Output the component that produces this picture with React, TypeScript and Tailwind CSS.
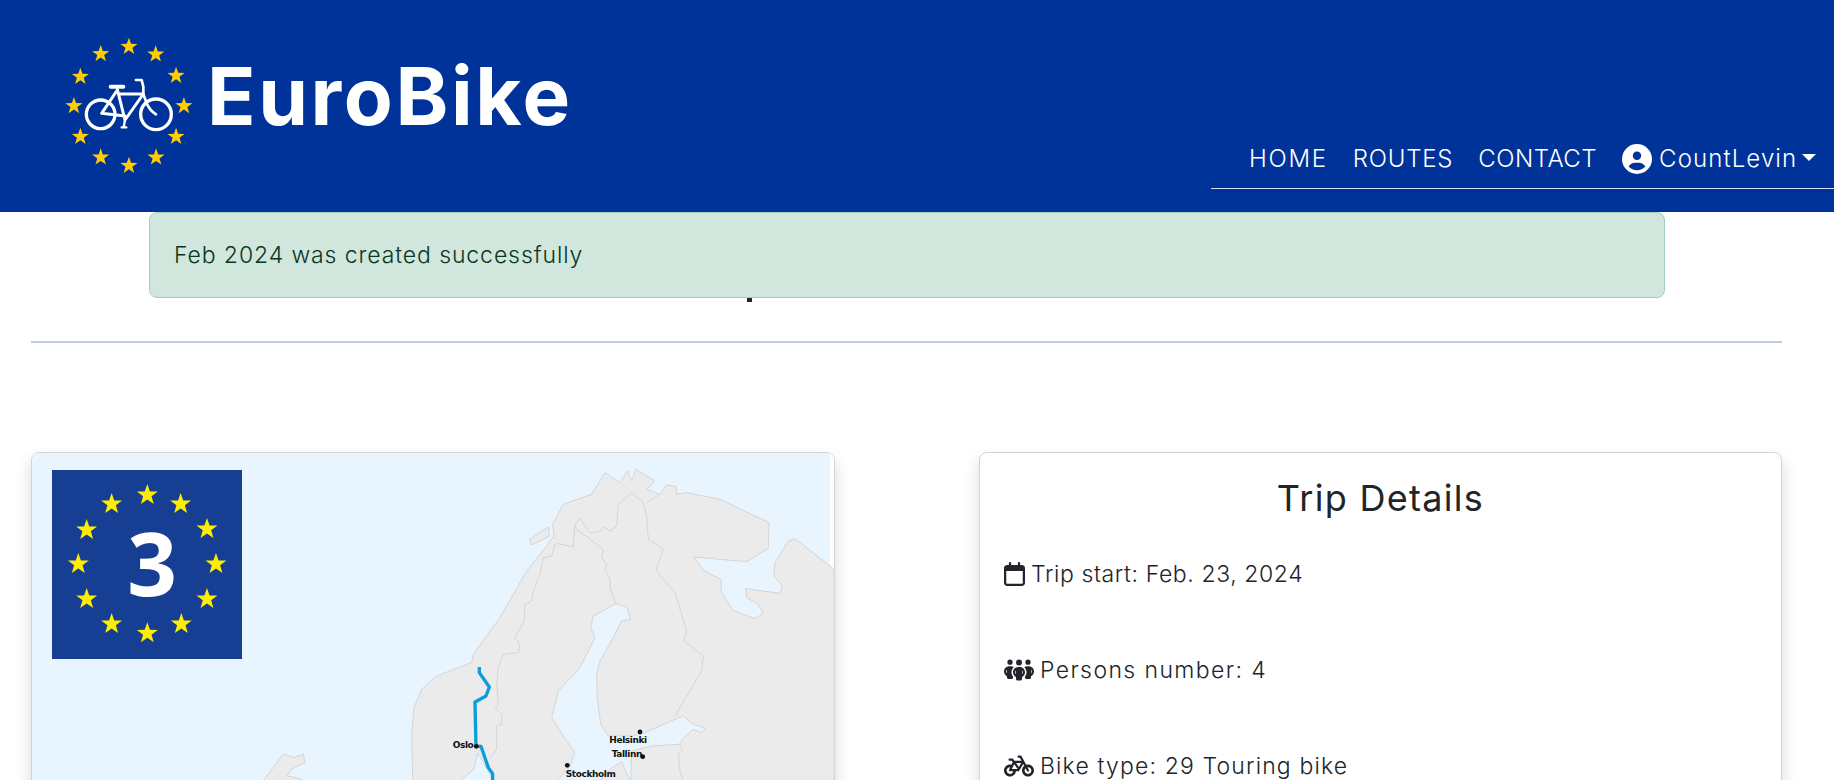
import React from "react";
import { FaRegCalendar, FaPeopleGroup, FaBicycle, FaCircleUser } from "react-icons/fa6";

function starPoints(cx: number, cy: number, R: number): string {
  const pts: string[] = [];
  for (let i = 0; i < 10; i++) {
    const r = i % 2 === 0 ? R : R * 0.4;
    const a = -Math.PI / 2 + (i * Math.PI) / 5;
    pts.push(`${(cx + r * Math.cos(a)).toFixed(2)},${(cy + r * Math.sin(a)).toFixed(2)}`);
  }
  return pts.join(" ");
}

const logoStars = [
  [249, 80], [324, 103], [381, 167], [403, 258], [381, 350], [325, 412],
  [249, 437], [170, 412], [113, 350], [95, 258], [113, 170], [170, 102],
].map(([x, y]) => [x / 2.8 + 40, y / 3 + 20]);

const flagStars = [
  [382, 160], [482, 187], [561, 262], [588, 367], [561, 472], [484, 547],
  [382, 575], [275, 547], [200, 472], [175, 367], [200, 265], [275, 187],
];

function Logo() {
  return (
    <svg width="130" height="140" viewBox="65 36 130 140" className="shrink-0">
      {logoStars.map(([x, y], i) => (
        <polygon key={i} points={starPoints(x, y, 9)} fill="#ffcc00" />
      ))}
      <g transform="translate(80 70) scale(0.3333)" fill="none" stroke="#fff" strokeWidth="10" strokeLinecap="round" strokeLinejoin="round">
        <circle cx="62" cy="133" r="43" />
        <circle cx="228" cy="133" r="46" />
        <path d="M112 58 L135 150 L190 72 L116 72 M112 60 L65 130 L135 138" strokeWidth="9" />
        <path d="M92 50 L130 50" strokeWidth="12" />
        <path d="M168 30 L185 30 L190 50 L190 72 L200 100 Q210 122 228 133" strokeWidth="8" />
        <path d="M135 150 L131 172 M125 172 L139 172" strokeWidth="7" />
      </g>
    </svg>
  );
}

function MapImage() {
  return (
    <svg viewBox="32 452 802 598" className="block h-[598px] w-[802px] bg-[#e8f5fe]">
      <g transform="translate(20 440) scale(0.3333)">
        <polygon
          points="730,1100 730,1020 790,938 820,950 850,940 855,965 815,985 800,1005 830,1010 880,1030 880,1100"
          fill="#ebebeb"
          stroke="#d4d4d4"
          strokeWidth="3"
        />
      </g>
      <g transform="translate(400 440) scale(0.3333)" strokeLinejoin="round">
        <polygon points="1290,30 1310,30 1310,392 1290,375" fill="#ffffff" />
        <polygon
          points="40,1100 35,880 42,800 65,745 110,705 215,665 220,640 300,530 340,460 380,390 440,315 462,285 458,250 490,190 575,160 615,95 660,125 683,88 695,120 708,85 765,120 740,145 780,160 800,132 828,137 830,160 860,155 960,175 1107,245 1105,322 1040,362 880,348 915,390 962,415 965,455 998,508 1065,533 1090,517 1075,490 1040,470 1037,443 1140,457 1147,435 1122,405 1125,365 1165,300 1185,293 1303,385 1303,1100"
          fill="#ebebeb"
          stroke="#d4d4d4"
          strokeWidth="3"
        />
        <polygon points="388,295 445,258 448,285 395,312" fill="#ebebeb" stroke="#d4d4d4" strokeWidth="3" />
        <polygon
          points="648,488 680,498 692,535 665,540 640,590 600,660 590,700 592,770 602,850 625,885 700,885 735,875 825,835 850,825 880,850 918,862 905,875 880,865 850,892 838,910 755,915 695,930 690,1100 470,1100 470,1020 490,1000 510,975 525,935 490,885 455,830 475,750 540,680 585,590 572,560 580,525"
          fill="#e8f5fe"
          stroke="#d4d4d4"
          strokeWidth="3"
        />
        <polygon points="590,1030 630,985 665,962 690,1020 700,1100 570,1100" fill="#ebebeb" stroke="#d4d4d4" strokeWidth="3" />
        <polygon points="233,935 222,985 180,1020 170,1100 300,1100 270,1000 250,965" fill="#e8f5fe" stroke="#d4d4d4" strokeWidth="3" />
        <g fill="none" stroke="#d4d4d4" strokeWidth="3">
          <polyline points="465,310 475,308 520,318 525,250 540,232 570,275 600,272 610,258 630,270 650,255 655,190 695,155 730,185 740,225 745,295 790,325 768,388 825,455 860,570 852,600 910,645 905,690 825,825" />
          <polyline points="525,250 530,265 610,325 605,350 620,370 615,385 630,415 630,440 648,488" />
          <polyline points="465,310 455,345 430,350 420,400 400,450 395,480 375,490 372,540 345,590 360,610 355,635 310,640 295,680 290,730 295,790 285,800 305,820 305,850 290,855 290,925 270,950" />
          <polyline points="740,185 780,160" />
          <polyline points="840,912 848,928 835,940 840,990 850,1020 870,1100" />
        </g>
        <polyline
          points="238,678 238,695 268,738 258,765 225,783 228,916 243,916 265,980 278,998 278,1100"
          fill="none"
          stroke="#0a9ed9"
          strokeWidth="10"
        />
      </g>
      <g fill="#111">
        <circle cx="476.3" cy="745.3" r="2.4" />
        <circle cx="567.3" cy="764.3" r="2.4" />
        <circle cx="640" cy="731" r="2.4" />
        <circle cx="642.7" cy="755.7" r="2.4" />
        <g fontFamily="'DejaVu Sans', sans-serif" fontSize="9" fontWeight="700" letterSpacing="-0.4">
          <text x="452.7" y="746.7">Oslo</text>
          <text x="565.7" y="776">Stockholm</text>
          <text x="609.3" y="742.3">Helsinki</text>
          <text x="611.7" y="756">Tallinn</text>
        </g>
      </g>
      <rect x="52" y="469" width="190" height="189" fill="#163f94" />
      <g transform="translate(20 440) scale(0.3333)">
        {flagStars.map(([x, y], i) => (
          <polygon key={i} points={starPoints(x, y + 2, 33)} fill="#ffed00" />
        ))}
      </g>
      <text x="152" y="595" textAnchor="middle" fill="#fff" fontFamily="'Open Sans', sans-serif" fontWeight="700" fontSize="87">
        3
      </text>
    </svg>
  );
}

export default function App() {
  return (
    <div className="relative h-[780px] overflow-hidden bg-white text-[#212529] [font-family:Inter,sans-serif]">
      <header className="flex h-[212px] justify-between bg-[#003399]">
        <div className="flex items-start pl-[65px] pt-[36px]">
          <Logo />
          <span className="ml-[12px] mt-[14px] text-[80px] leading-[92px] font-bold tracking-[2.6px] text-white">EuroBike</span>
        </div>
        <nav className="mb-[23px] flex h-[56px] w-[623px] items-center gap-[25px] self-end border-b border-[#d8def0] pb-[4px] pl-[38px] text-[24px] font-light text-white">
          <span className="tracking-[1.7px]">HOME</span>
          <span className="tracking-[0.8px]">ROUTES</span>
          <span className="tracking-[0.5px]">CONTACT</span>
          <span className="flex items-center tracking-[1.1px]">
            <FaCircleUser className="mr-[7px] text-[30px]" />
            CountLevin
            <span className="mb-[3px] ml-[5px] h-0 w-0 border-x-[7px] border-t-[7px] border-x-transparent border-t-white" />
          </span>
        </nav>
      </header>

      <div className="absolute left-[149px] top-[212px] flex h-[86px] w-[1516px] items-center rounded-[8px] border border-[#a3cfbb] bg-[#d1e7dd] px-[24px] text-[23px] font-light tracking-[0.9px] text-[#0a3622]">
        Feb 2024 was created successfully
      </div>

      <main className="pl-[31px] pr-[52px]">
        <div className="h-[131px] border-b-2 border-[#bfcbe8]" />
        <div className="mt-[109px] flex justify-between">
          <div className="h-[600px] w-[804px] overflow-hidden rounded-[8px] border border-[#d4d4d4] shadow-[0_8px_16px_rgba(0,0,0,0.15)]">
            <MapImage />
          </div>
          <div className="h-[600px] w-[803px] rounded-[8px] border border-[#d4d4d4] px-[24px] pt-[23px] shadow-[0_8px_16px_rgba(0,0,0,0.15)]">
            <h2 className="mb-[38px] text-center text-[36px] leading-[44px] font-normal tracking-[1.3px]">Trip Details</h2>
            <p className="mb-[64px] flex h-[32px] items-center text-[23px] font-light tracking-[0.6px]">
              <FaRegCalendar className="mr-[6px] h-[24px] w-[21px]" />
              Trip start: Feb. 23, 2024
            </p>
            <p className="mb-[64px] flex h-[32px] items-center text-[23px] font-light tracking-[1.4px]">
              <FaPeopleGroup className="mr-[6px] h-[24px] w-[30px]" />
              Persons number: 4
            </p>
            <p className="mb-[64px] flex h-[32px] items-center text-[23px] font-light tracking-[1.15px]">
              <FaBicycle className="mr-[6px] h-[24px] w-[30px]" />
              Bike type: 29 Touring bike
            </p>
          </div>
        </div>
      </main>
      <span className="absolute left-[747px] top-[298px] h-[4px] w-[5px] bg-[#212529]" />
    </div>
  );
}
